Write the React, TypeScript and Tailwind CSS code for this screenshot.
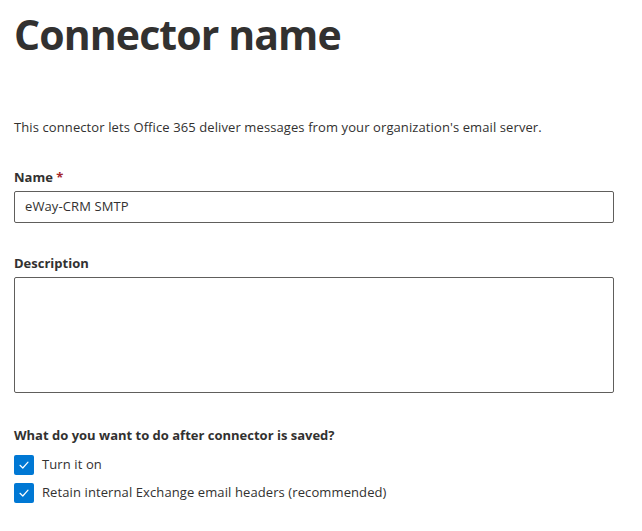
import React from "react";

function Check() {
  return (
    <span className="flex h-5 w-5 shrink-0 items-center justify-center rounded-[2px] bg-[#0078d4]">
      <svg width="12" height="12" viewBox="0 0 12 12" fill="none">
        <path d="M2 6.3 L4.8 9 L10 3.2" stroke="white" strokeWidth="1.2" strokeLinecap="round" strokeLinejoin="round" />
      </svg>
    </span>
  );
}

export default function App() {
  return (
    <div
      className="min-h-[531px] w-[642px] bg-white pl-[14px] pr-[28px] text-[#323130]"
      style={{ fontFamily: '"Open Sans", "Noto Sans", sans-serif' }}
    >
      <h1 className="pt-[4px] text-[41px] font-bold leading-[60px] tracking-[-0.9px] text-[#323130]">Connector name</h1>
      <p className="mt-[54px] text-[13px] leading-[18px] tracking-[0.1px]">
        This connector lets Office 365 deliver messages from your organization's email server.
      </p>
      <div className="mt-[32px] text-[13px] font-bold leading-[18px]">
        Name <span className="text-[#a4262c]">*</span>
      </div>
      <div className="mt-[5px] flex h-[32px] items-center rounded-[2px] border border-[#605e5c] px-[10px] text-[13px] tracking-[0.1px]">
        eWay-CRM SMTP
      </div>
      <div className="mt-[31px] text-[13px] font-bold leading-[18px]">Description</div>
      <div className="mt-[5px] h-[116px] rounded-[2px] border border-[#605e5c]" />
      <div className="mt-[33px] text-[13px] font-bold leading-[18px]">What do you want to do after connector is saved?</div>
      <div className="mt-[11px] flex flex-col gap-[8px] text-[13px] tracking-[0.1px]">
        <div className="flex items-center gap-[8px]">
          <Check />
          <span>Turn it on</span>
        </div>
        <div className="flex items-center gap-[8px]">
          <Check />
          <span>Retain internal Exchange email headers (recommended)</span>
        </div>
      </div>
    </div>
  );
}
